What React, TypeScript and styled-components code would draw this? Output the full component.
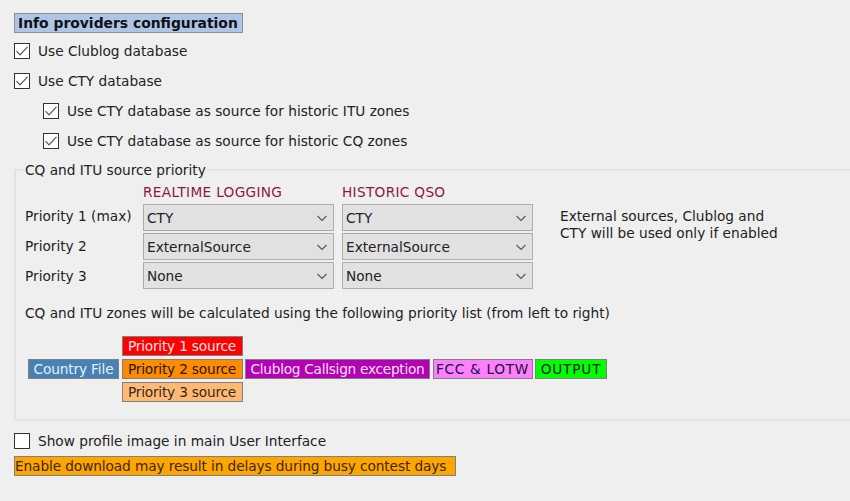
import React from "react";
import styled, { createGlobalStyle } from "styled-components";

const Global = createGlobalStyle`
  html, body { margin: 0; padding: 0; background: #efefef; }
  body { font-family: "DejaVu Sans", "Noto Sans", sans-serif; font-size: 13.7px; color: #222; }
  * { box-sizing: border-box; }
`;

const Page = styled.div`
  width: 850px; height: 501px; overflow: hidden;
  padding: 13px 0 0 14px; display: flex; flex-direction: column;
`;
const Title = styled.div`
  width: 229px; height: 20px; background: #aec6e4; border: 1px solid #8a8f96;
  font-weight: 700; font-size: 13.9px; line-height: 19px; padding-left: 3px; color: #101018;
  white-space: nowrap;
`;
const CheckRow = styled.label<{ $indent?: boolean; $top: number }>`
  display: flex; align-items: center; height: 16px; gap: 8px; white-space: nowrap;
  margin-top: ${p => p.$top}px; margin-left: ${p => (p.$indent ? 29 : 0)}px;
`;
const Box = styled.span`
  width: 16px; height: 16px; background: #fff; border: 1px solid #333; flex: none;
  display: flex; align-items: center; justify-content: center;
`;
const Group = styled.fieldset`
  margin: 12px 0 0 0; padding: 0 0 0 9px; border: 2px solid #e3e3e3; border-right: 0;
  height: 260px; min-width: 0; width: 836px; display: block;
`;
const Legend = styled.legend`
  padding: 0 1px; line-height: 18px; margin-left: -1px;
`;
const Grid = styled.div`
  display: grid; grid-template-columns: 110px 191px 191px 1fr; column-gap: 8px;
  grid-template-rows: 20px 27px 27px 27px; row-gap: 2px; margin-top: 3px;
`;
const Head = styled.div`
  color: #8e1a36; line-height: 21px; white-space: nowrap; letter-spacing: 0.3px;
`;
const LabelColumn = styled.div`
  grid-column: 1; grid-row: 2 / span 3; margin-top: -3px;
  display: grid; grid-auto-rows: 30px; align-items: center; white-space: nowrap;
`;
const Combo = styled.div`
  background: #e1e1e1; border: 1px solid #adadad; display: flex;
  align-items: center; justify-content: space-between; padding: 0 5px 0 3px; white-space: nowrap;
`;
const Note = styled.div`
  grid-row: 2 / span 2; grid-column: 4; padding: 4px 0 0 19px; line-height: 17px;
`;
const Sentence = styled.div`
  margin-top: 15px; white-space: nowrap; line-height: 19px;
`;
const Flow = styled.div`
  display: flex; align-items: center; gap: 2.5px; margin: 13px 0 0 3px;
`;
const Stack = styled.div`
  display: flex; flex-direction: column; gap: 3px;
`;
const Tag = styled.div<{ $bg: string; $fg: string; $w: number; $track?: number }>`
  width: ${p => p.$w}px; height: 20px; background: ${p => p.$bg}; color: ${p => p.$fg};
  border: 1px solid #808080; line-height: 18px; white-space: nowrap; text-align: center;
  letter-spacing: ${p => p.$track ?? 0}px;
`;
const Warning = styled.div`
  width: 442px; height: 20px; margin-top: 7px; background: #ffa500; border: 1px solid #808080;
  line-height: 19px; color: #3a2800; white-space: nowrap; letter-spacing: -0.1px;
`;

const Tick = () => (
  <svg width="14" height="14" viewBox="0 0 14 14" fill="none">
    <path d="M1.5 7.2 L5 10.8 L12.5 2.8" stroke="#555" strokeWidth="1.2" />
  </svg>
);
const Chevron = () => (
  <svg width="12" height="12" viewBox="0 0 12 12" fill="none">
    <path d="M1.5 4 L6 8.5 L10.5 4" stroke="#555" strokeWidth="1.1" />
  </svg>
);
const Check = ({ on, indent, top, children }: { on: boolean; indent?: boolean; top: number; children: React.ReactNode }) => (
  <CheckRow $indent={indent} $top={top}>
    <Box>{on && <Tick />}</Box>
    <span>{children}</span>
  </CheckRow>
);

const values = ["CTY", "ExternalSource", "None"];

export default function App() {
  return (
    <Page>
      <Global />
      <Title>Info providers configuration</Title>
      <Check on top={10}>Use Clublog database</Check>
      <Check on top={14}>Use CTY database</Check>
      <Check on indent top={14}>Use CTY database as source for historic ITU zones</Check>
      <Check on indent top={14}>Use CTY database as source for historic CQ zones</Check>
      <Group>
        <Legend>CQ and ITU source priority</Legend>
        <Grid>
          <div />
          <Head>REALTIME LOGGING</Head>
          <Head>HISTORIC QSO</Head>
          <div />
          <LabelColumn>
            <div>Priority 1 (max)</div>
            <div>Priority 2</div>
            <div>Priority 3</div>
          </LabelColumn>
          <Note>External sources, Clublog and<br />CTY will be used only if enabled</Note>
          {values.map(value => (
            <React.Fragment key={value}>
              <Combo>{value}<Chevron /></Combo>
              <Combo>{value}<Chevron /></Combo>
            </React.Fragment>
          ))}
        </Grid>
        <Sentence>CQ and ITU zones will be calculated using the following priority list (from left to right)</Sentence>
        <Flow>
          <Tag $bg="#4682b4" $fg="#e6f0fa" $w={91} $track={-0.15}>Country File</Tag>
          <Stack>
            <Tag $bg="#ff0000" $fg="#ffe6e6" $w={121} $track={-0.2}>Priority 1 source</Tag>
            <Tag $bg="#ff8c00" $fg="#2a1800" $w={121} $track={-0.2}>Priority 2 source</Tag>
            <Tag $bg="#ffb972" $fg="#332a22" $w={121} $track={-0.2}>Priority 3 source</Tag>
          </Stack>
          <Tag $bg="#b400b4" $fg="#fbe0fb" $w={185} $track={-0.27}>Clublog Callsign exception</Tag>
          <Tag $bg="#ff80ff" $fg="#201040" $w={100} $track={0.7}>FCC &amp; LOTW</Tag>
          <Tag $bg="#00ff00" $fg="#0a200a" $w={72} $track={0.8}>OUTPUT</Tag>
        </Flow>
      </Group>
      <Check on={false} top={12}>Show profile image in main User Interface</Check>
      <Warning>Enable download may result in delays during busy contest days</Warning>
    </Page>
  );
}
